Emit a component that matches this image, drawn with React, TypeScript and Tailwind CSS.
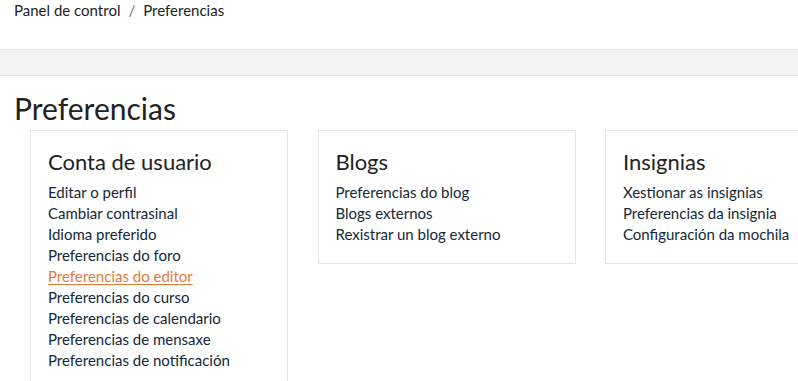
import React from "react";

const sections = [
    {
        title: "Conta de usuario",
        links: [
            "Editar o perfil",
            "Cambiar contrasinal",
            "Idioma preferido",
            "Preferencias do foro",
            "Preferencias do editor",
            "Preferencias do curso",
            "Preferencias de calendario",
            "Preferencias de mensaxe",
            "Preferencias de notificación",
        ],
    },
    {
        title: "Blogs",
        links: ["Preferencias do blog", "Blogs externos", "Rexistrar un blog externo"],
    },
    {
        title: "Insignias",
        links: ["Xestionar as insignias", "Preferencias da insignia", "Configuración da mochila"],
    },
];

export default function App() {
    return (
        <div className="w-[798px] h-[381px] overflow-hidden bg-white text-[#1d2125] font-['Lato','Liberation_Sans',sans-serif]">
            <nav className="h-[49px] px-[14px] pt-[1px] text-[15px] leading-[18px] flex gap-[8px]">
                <span>Panel de control</span>
                <span className="text-[#6a737b]">/</span>
                <span>Preferencias</span>
            </nav>
            <div className="h-[27px] bg-[#f3f3f3] border-y border-[#e6e6e6]" />
            <h1 className="px-[14px] pt-[15px] text-[30px] leading-[35px] font-normal text-[#222]">Preferencias</h1>
            <div className="flex gap-[29.5px] pl-[30px] pt-[4px] items-start">
                {sections.map((s) => (
                    <div key={s.title} className="w-[258px] shrink-0 border border-[#e6e6e6] px-[17px] pt-[17px] pb-[18px]">
                        <h2 className="text-[22px] leading-[28px] text-[#222] mb-[6px]">{s.title}</h2>
                        <ul className="text-[15px] leading-[21px] text-[#14283a]">
                            {s.links.map((l) => (
                                <li key={l}>
                                    <a
                                        href="#"
                                        className={l === "Preferencias do editor" ? "text-[#e5793b] underline underline-offset-2" : ""}
                                    >
                                        {l}
                                    </a>
                                </li>
                            ))}
                        </ul>
                    </div>
                ))}
            </div>
        </div>
    );
}
